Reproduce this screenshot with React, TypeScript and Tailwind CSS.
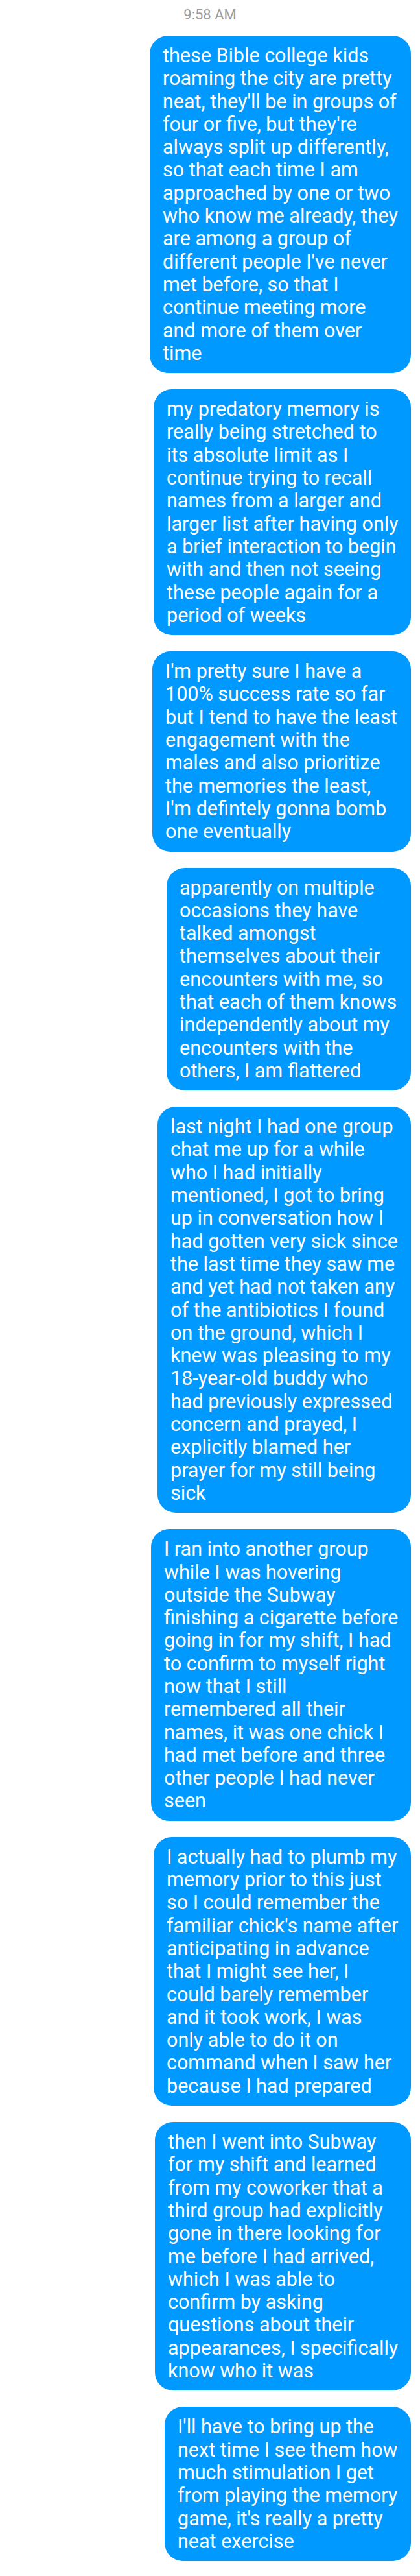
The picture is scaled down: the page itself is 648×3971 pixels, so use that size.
const messages: { width: string; lines: string[] }[] = [
  {
    width: "w-[403px]",
    lines: [
      "these Bible college kids",
      "roaming the city are pretty",
      "neat, they'll be in groups of",
      "four or five, but they're",
      "always split up differently,",
      "so that each time I am",
      "approached by one or two",
      "who know me already, they",
      "are among a group of",
      "different people I've never",
      "met before, so that I",
      "continue meeting more",
      "and more of them over",
      "time",
    ],
  },
  {
    width: "w-[397px]",
    lines: [
      "my predatory memory is",
      "really being stretched to",
      "its absolute limit as I",
      "continue trying to recall",
      "names from a larger and",
      "larger list after having only",
      "a brief interaction to begin",
      "with and then not seeing",
      "these people again for a",
      "period of weeks",
    ],
  },
  {
    width: "w-[399px]",
    lines: [
      "I'm pretty sure I have a",
      "100% success rate so far",
      "but I tend to have the least",
      "engagement with the",
      "males and also prioritize",
      "the memories the least,",
      "I'm defintely gonna bomb",
      "one eventually",
    ],
  },
  {
    width: "w-[377px]",
    lines: [
      "apparently on multiple",
      "occasions they have",
      "talked amongst",
      "themselves about their",
      "encounters with me, so",
      "that each of them knows",
      "independently about my",
      "encounters with the",
      "others, I am flattered",
    ],
  },
  {
    width: "w-[391px]",
    lines: [
      "last night I had one group",
      "chat me up for a while",
      "who I had initially",
      "mentioned, I got to bring",
      "up in conversation how I",
      "had gotten very sick since",
      "the last time they saw me",
      "and yet had not taken any",
      "of the antibiotics I found",
      "on the ground, which I",
      "knew was pleasing to my",
      "18-year-old buddy who",
      "had previously expressed",
      "concern and prayed, I",
      "explicitly blamed her",
      "prayer for my still being",
      "sick",
    ],
  },
  {
    width: "w-[401px]",
    lines: [
      "I ran into another group",
      "while I was hovering",
      "outside the Subway",
      "finishing a cigarette before",
      "going in for my shift, I had",
      "to confirm to myself right",
      "now that I still",
      "remembered all their",
      "names, it was one chick I",
      "had met before and three",
      "other people I had never",
      "seen",
    ],
  },
  {
    width: "w-[397px]",
    lines: [
      "I actually had to plumb my",
      "memory prior to this just",
      "so I could remember the",
      "familiar chick's name after",
      "anticipating in advance",
      "that I might see her, I",
      "could barely remember",
      "and it took work, I was",
      "only able to do it on",
      "command when I saw her",
      "because I had prepared",
    ],
  },
  {
    width: "w-[395px]",
    lines: [
      "then I went into Subway",
      "for my shift and learned",
      "from my coworker that a",
      "third group had explicitly",
      "gone in there looking for",
      "me before I had arrived,",
      "which I was able to",
      "confirm by asking",
      "questions about their",
      "appearances, I specifically",
      "know who it was",
    ],
  },
  {
    width: "w-[380px]",
    lines: [
      "I'll have to bring up the",
      "next time I see them how",
      "much stimulation I get",
      "from playing the memory",
      "game, it's really a pretty",
      "neat exercise",
    ],
  },
];

export default function App() {
  return (
    <main className="min-h-screen bg-white pb-[24px] font-['Roboto',sans-serif]">
      <div className="pt-[10px] text-center text-[22px] leading-[26px] text-[#9b9b9b]">
        9:58 AM
      </div>

      <div className="mt-[19px] flex flex-col items-end gap-[25px] pr-[14px]">
        {messages.map((msg, i) => (
          <div
            key={i}
            className={`${msg.width} rounded-[28px] bg-[#0099ff] py-[13px] pl-[20px] text-[30.5px] leading-[35.3px] text-white`}
          >
            {msg.lines.map((line, j) => (
              <div key={j} className="whitespace-nowrap">
                {line}
              </div>
            ))}
          </div>
        ))}
      </div>
    </main>
  );
}
